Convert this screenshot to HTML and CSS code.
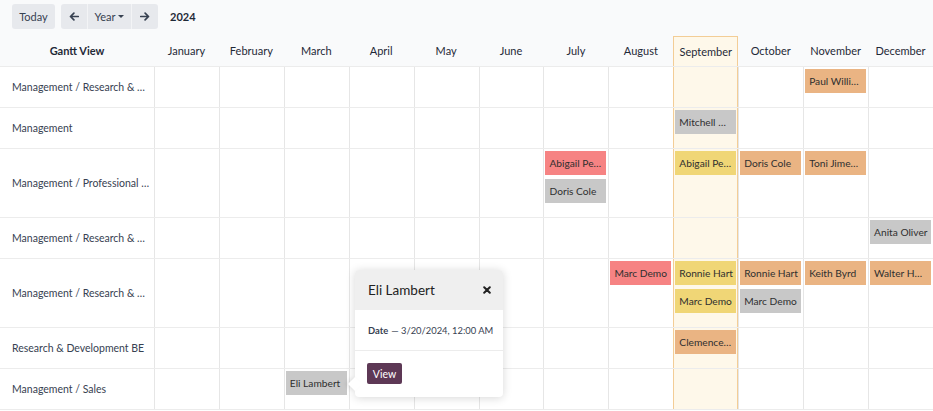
FILE: index.html
```html
<!DOCTYPE html>
<html>
<head>
<meta charset="utf-8">
<link rel="stylesheet" href="styles.css">
</head>
<body>
<div class="app">
  <div class="toolbar">
    <button class="btn btn-today">Today</button>
    <div class="btn-group">
      <button class="btn btn-icon"><svg width="10" height="9" viewBox="0 0 10 9"><path d="M9.3 4.5H1.6M4.9 1.1L1.5 4.5L4.9 7.9" fill="none" stroke="#374151" stroke-width="1.7" stroke-linecap="round" stroke-linejoin="round"/></svg></button>
      <button class="btn btn-mid">Year<span class="caret"></span></button>
      <button class="btn btn-icon"><svg width="10" height="9" viewBox="0 0 10 9"><path d="M0.7 4.5H8.4M5.1 1.1L8.5 4.5L5.1 7.9" fill="none" stroke="#374151" stroke-width="1.7" stroke-linecap="round" stroke-linejoin="round"/></svg></button>
    </div>
    <span class="period">2024</span>
  </div>

  <div class="gantt">
    <div class="grow header">
      <div class="hcell title">Gantt View</div>
      <div class="hcell">January</div>
      <div class="hcell">February</div>
      <div class="hcell">March</div>
      <div class="hcell">April</div>
      <div class="hcell">May</div>
      <div class="hcell">June</div>
      <div class="hcell">July</div>
      <div class="hcell">August</div>
      <div class="hcell today">September</div>
      <div class="hcell">October</div>
      <div class="hcell">November</div>
      <div class="hcell">December</div>
    </div>

    <div class="grow">
      <div class="label">Management / Research &amp; …</div>
      <div class="cell"></div><div class="cell"></div><div class="cell"></div><div class="cell"></div>
      <div class="cell"></div><div class="cell"></div><div class="cell"></div><div class="cell"></div>
      <div class="cell today"></div><div class="cell"></div>
      <div class="cell"><div class="pill orange">Paul Willi…</div></div>
      <div class="cell"></div>
    </div>

    <div class="grow">
      <div class="label">Management</div>
      <div class="cell"></div><div class="cell"></div><div class="cell"></div><div class="cell"></div>
      <div class="cell"></div><div class="cell"></div><div class="cell"></div><div class="cell"></div>
      <div class="cell today"><div class="pill gray">Mitchell …</div></div>
      <div class="cell"></div><div class="cell"></div><div class="cell"></div>
    </div>

    <div class="grow">
      <div class="label">Management / Professional …</div>
      <div class="cell"></div><div class="cell"></div><div class="cell"></div><div class="cell"></div>
      <div class="cell"></div><div class="cell"></div>
      <div class="cell"><div class="pill red">Abigail Pe…</div><div class="pill gray">Doris Cole</div></div>
      <div class="cell"></div>
      <div class="cell today"><div class="pill yellow">Abigail Pe…</div></div>
      <div class="cell"><div class="pill orange">Doris Cole</div></div>
      <div class="cell"><div class="pill orange">Toni Jime…</div></div>
      <div class="cell"></div>
    </div>

    <div class="grow">
      <div class="label">Management / Research &amp; …</div>
      <div class="cell"></div><div class="cell"></div><div class="cell"></div><div class="cell"></div>
      <div class="cell"></div><div class="cell"></div><div class="cell"></div><div class="cell"></div>
      <div class="cell today"></div><div class="cell"></div><div class="cell"></div>
      <div class="cell"><div class="pill gray">Anita Oliver</div></div>
    </div>

    <div class="grow">
      <div class="label">Management / Research &amp; …</div>
      <div class="cell"></div><div class="cell"></div><div class="cell"></div><div class="cell"></div>
      <div class="cell"></div><div class="cell"></div><div class="cell"></div>
      <div class="cell"><div class="pill red">Marc Demo</div></div>
      <div class="cell today"><div class="pill yellow">Ronnie Hart</div><div class="pill yellow">Marc Demo</div></div>
      <div class="cell"><div class="pill orange">Ronnie Hart</div><div class="pill gray">Marc Demo</div></div>
      <div class="cell"><div class="pill orange">Keith Byrd</div></div>
      <div class="cell"><div class="pill orange">Walter H…</div></div>
    </div>

    <div class="grow">
      <div class="label">Research &amp; Development BE</div>
      <div class="cell"></div><div class="cell"></div><div class="cell"></div><div class="cell"></div>
      <div class="cell"></div><div class="cell"></div><div class="cell"></div><div class="cell"></div>
      <div class="cell today"><div class="pill orange">Clemence…</div></div>
      <div class="cell"></div><div class="cell"></div><div class="cell"></div>
    </div>

    <div class="grow">
      <div class="label">Management / Sales</div>
      <div class="cell"></div><div class="cell"></div>
      <div class="cell"><div class="pill gray">Eli Lambert</div></div>
      <div class="cell"></div><div class="cell"></div><div class="cell"></div><div class="cell"></div><div class="cell"></div>
      <div class="cell today"></div><div class="cell"></div><div class="cell"></div><div class="cell"></div>
    </div>
  </div>

  <div class="popover">
    <div class="pop-head">
      <span class="pop-title">Eli Lambert</span>
      <svg class="pop-close" width="8" height="8" viewBox="0 0 8 8"><path d="M1.2 1.2L6.8 6.8M6.8 1.2L1.2 6.8" stroke="#222" stroke-width="2" stroke-linecap="round"/></svg>
    </div>
    <div class="pop-body"><b>Date</b> — 3/20/2024, 12:00 AM</div>
    <div class="pop-foot"><button class="view-btn">View</button></div>
  </div>
</div>
</body>
</html>
```

FILE: styles.css
```css
* { box-sizing: border-box; }
html, body { margin: 0; padding: 0; }
body {
  font-family: "Lato", "Noto Sans", sans-serif;
  font-size: 11px;
  color: #374151;
  background: #ffffff;
  width: 933px;
  height: 411px;
  overflow: hidden;
}
.app { position: relative; width: 933px; height: 411px; }

.toolbar {
  height: 36px;
  background: #f9fafb;
  display: flex;
  align-items: flex-start;
  padding: 4px 0 0 12px;
  gap: 6px;
}
.btn {
  font-family: inherit;
  font-size: 11px;
  color: #374151;
  background: #e7e9ed;
  border: 0;
  height: 25px;
  padding: 0 8px;
  border-radius: 3px;
  display: flex;
  align-items: center;
  justify-content: center;
}
.btn-today { width: 43px; padding: 0; }
.btn-group { display: flex; }
.btn-group .btn { border-radius: 0; }
.btn-group .btn:first-child { border-radius: 3px 0 0 3px; }
.btn-group .btn:last-child { border-radius: 0 3px 3px 0; }
.btn-icon { width: 26px; padding: 0; }
.btn-mid {
  width: 45px;
  padding: 0;
  border-left: 1px solid #f3f4f6;
  border-right: 1px solid #f3f4f6;
}
.caret {
  display: inline-block;
  margin-left: 3px;
  border-left: 3px solid transparent;
  border-right: 3px solid transparent;
  border-top: 3px solid #374151;
  vertical-align: middle;
}
.period {
  font-weight: 700;
  font-size: 11px;
  color: #1f2937;
  line-height: 25px;
  margin-left: 6px;
}

.gantt { width: 933px; }
.grow {
  display: grid;
  grid-template-columns: 154px repeat(12, 1fr);
  border-bottom: 1px solid #ececec;
}
.header {
  height: 31px;
  background: #f9fafb;
  border-bottom: 1px solid #ececec;
}
.hcell {
  display: flex;
  align-items: center;
  justify-content: center;
  color: #1f2937;
  font-size: 11px;
  white-space: nowrap;
  padding-bottom: 1px;
}
.hcell.title { font-weight: 700; }
.hcell.today {
  background: #fef8ea;
  border: 1px solid #f3cd96;
  border-bottom: 0;
}
.label {
  display: flex;
  align-items: center;
  padding: 0 4px 0 12px;
  font-size: 10.5px;
  color: #374151;
  white-space: nowrap;
  overflow: hidden;
}
.cell {
  border-left: 1px solid #e6e6e6;
  padding: 2px 2px 14px 1px;
  display: flex;
  flex-direction: column;
  gap: 4px;
  min-height: 40px;
  min-width: 0;
}
.cell.today {
  background: #fef8ea;
  border-left: 1px solid #f3cd96;
  box-shadow: inset -1px 0 0 #f3cd96;
}
.pill {
  height: 24px;
  line-height: 24px;
  padding: 0 3px 0 4px;
  color: #2f2f2f;
  font-size: 10.2px;
  white-space: nowrap;
  overflow: hidden;
}
.pill.red { background: #f68383; }
.pill.yellow { background: #f0d676; }
.pill.orange { background: #eab483; }
.pill.gray { background: #c8c8c8; }

.popover {
  position: absolute;
  left: 355px;
  top: 270px;
  width: 148px;
  background: #fff;
  border-radius: 4px;
  box-shadow: 0 1px 10px rgba(0, 0, 0, 0.16);
}
.popover::before {
  content: "";
  position: absolute;
  left: -5px;
  top: 109px;
  width: 10px;
  height: 10px;
  background: #fff;
  transform: rotate(45deg);
  box-shadow: -2px 2px 4px rgba(0, 0, 0, 0.08);
}
.pop-head {
  position: relative;
  height: 40px;
  background: #efefef;
  border-radius: 4px 4px 0 0;
  display: flex;
  align-items: center;
  justify-content: space-between;
  padding: 0 12px 0 13px;
}
.pop-title { font-size: 13.5px; color: #222; }
.pop-body {
  position: relative;
  height: 41px;
  display: flex;
  align-items: center;
  padding: 0 13px;
  font-size: 9.4px;
  color: #374151;
  border-bottom: 1px solid #ececec;
  white-space: nowrap;
}
.pop-body b { font-weight: 700; margin-right: 3px; }
.pop-foot { position: relative; padding: 12px 12px 13px; }
.view-btn {
  font-family: inherit;
  font-size: 10.5px;
  color: #fff;
  background: #5d3855;
  border: 0;
  border-radius: 2px;
  height: 21px;
  width: 35px;
  padding: 0;
}
```
